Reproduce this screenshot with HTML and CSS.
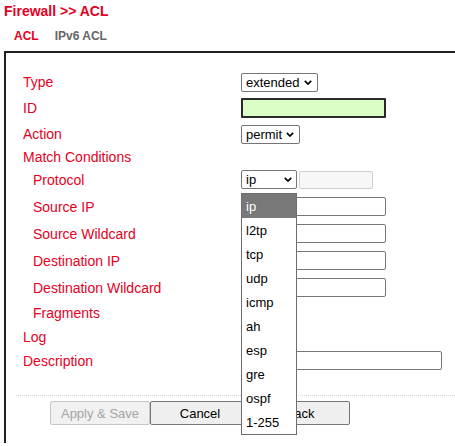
FILE: index.html
```html
<!DOCTYPE html>
<html>
<head>
<meta charset="utf-8">
<link rel="stylesheet" href="styles.css">
</head>
<body>
<div class="page">
  <div class="title">Firewall &gt;&gt; ACL</div>
  <div class="tabs"><span class="tab active">ACL</span><span class="tab">IPv6 ACL</span></div>
  <div class="panel">
    <div class="row h26">
      <div class="label">Type</div>
      <div class="select"><span class="sel-text">extended</span><svg class="chev" width="8" height="5" viewBox="0 0 8 5"><path d="M0.8 0.8 L4 4 L7.2 0.8" fill="none" stroke="#000" stroke-width="1.7"/></svg></div>
    </div>
    <div class="row h26">
      <div class="label">ID</div>
      <div class="input id-input"></div>
    </div>
    <div class="row h26">
      <div class="label">Action</div>
      <div class="select"><span class="sel-text">permit</span><svg class="chev" width="8" height="5" viewBox="0 0 8 5"><path d="M0.8 0.8 L4 4 L7.2 0.8" fill="none" stroke="#000" stroke-width="1.7"/></svg></div>
    </div>
    <div class="row h19">
      <div class="label">Match Conditions</div>
    </div>
    <div class="row h27">
      <div class="label sub">Protocol</div>
      <div class="ctrl-group">
        <div class="proto-wrap">
          <div class="select proto"><span class="sel-text">ip</span><svg class="chev" width="8" height="5" viewBox="0 0 8 5"><path d="M0.8 0.8 L4 4 L7.2 0.8" fill="none" stroke="#000" stroke-width="1.7"/></svg></div>
          <div class="popup">
            <div class="opt selected">ip</div>
            <div class="opt">l2tp</div>
            <div class="opt">tcp</div>
            <div class="opt">udp</div>
            <div class="opt">icmp</div>
            <div class="opt">ah</div>
            <div class="opt">esp</div>
            <div class="opt">gre</div>
            <div class="opt">ospf</div>
            <div class="opt">1-255</div>
          </div>
        </div>
        <div class="input disabled-input"></div>
      </div>
    </div>
    <div class="row h27">
      <div class="label sub">Source IP</div>
      <div class="input"></div>
    </div>
    <div class="row h27">
      <div class="label sub">Source Wildcard</div>
      <div class="input"></div>
    </div>
    <div class="row h27">
      <div class="label sub">Destination IP</div>
      <div class="input"></div>
    </div>
    <div class="row h27">
      <div class="label sub">Destination Wildcard</div>
      <div class="input"></div>
    </div>
    <div class="row h23">
      <div class="label sub">Fragments</div>
    </div>
    <div class="row h25">
      <div class="label">Log</div>
    </div>
    <div class="row h23">
      <div class="label">Description</div>
      <div class="input wide"></div>
    </div>
    <div class="sep"></div>
    <div class="buttons">
      <button class="btn" disabled>Apply &amp; Save</button>
      <button class="btn">Cancel</button>
      <button class="btn">Back</button>
    </div>
  </div>
</div>
</body>
</html>
```
FILE: styles.css
```css
html, body {
  margin: 0;
  padding: 0;
  overflow: hidden;
  background: #fff;
}
body {
  font-family: "Liberation Sans", Arial, sans-serif;
  color: #000;
}
.page {
  padding: 3px 0 0 4px;
}
.title {
  font-size: 14px;
  font-weight: bold;
  line-height: 16px;
  color: #e6001e;
}
.tabs {
  margin-top: 10px;
  padding-left: 10px;
  display: flex;
  gap: 16px;
  font-size: 12px;
  font-weight: bold;
  line-height: 14px;
}
.tab {
  color: #666;
}
.tab.active {
  color: #e6001e;
}
.panel {
  margin-top: 8px;
  border-top: 2px solid #222;
  border-left: 2px solid #222;
  padding-top: 16px;
  padding-bottom: 18px;
}
.row {
  display: flex;
  align-items: center;
  padding-left: 17px;
}
.h19 { height: 19px; }
.h23 { height: 23px; }
.h25 { height: 25px; }
.h26 { height: 26px; }
.h27 { height: 27px; }
.label {
  width: 218px;
  flex: none;
  font-size: 14px;
  line-height: 16px;
  color: #e6001e;
}
.label.sub {
  width: 208px;
  padding-left: 10px;
}
.select {
  box-sizing: border-box;
  height: 19px;
  display: inline-flex;
  align-items: center;
  border: 1px solid #767676;
  border-radius: 2px;
  background: #fff;
  padding: 0 5px 0 4px;
  font-size: 13px;
  line-height: 15px;
}
.sel-text {
  flex: 1;
  margin-right: 4px;
}
.chev {
  display: block;
  flex: none;
}
.select.proto {
  width: 56px;
  padding-right: 4px;
}
.ctrl-group {
  display: flex;
  gap: 2px;
  align-items: center;
}
.proto-wrap {
  position: relative;
}
.popup {
  position: absolute;
  left: 0;
  top: 23px;
  width: 56px;
  box-sizing: border-box;
  border: 1px solid #6e6e6e;
  background: #fff;
  z-index: 10;
}
.opt {
  height: 24px;
  line-height: 25px;
  font-size: 13px;
  padding-left: 4px;
  color: #000;
}
.opt.selected {
  background: #787878;
  color: #fff;
}
.input {
  box-sizing: border-box;
  width: 145px;
  height: 19px;
  border: 1px solid #767676;
  border-radius: 2px;
  background: #fff;
}
.input.id-input {
  border: 2px solid #2a2a2a;
  border-radius: 1px;
  background: #d9ffc6;
  height: 20px;
}
.input.disabled-input {
  width: 74px;
  height: 18px;
  border: 1px solid #d0d0d0;
  background: #f7f7f7;
}
.input.wide {
  width: 201px;
}
.sep {
  margin: 23px 0 0 10px;
  border-top: 1px dotted #d4d4d4;
}
.buttons {
  display: flex;
  padding-left: 44px;
  margin-top: 5px;
}
.btn {
  box-sizing: border-box;
  width: 100px;
  height: 24px;
  margin: 0;
  padding: 0;
  font-family: "Liberation Sans", Arial, sans-serif;
  font-size: 13px;
  color: #000;
  background: #efefef;
  border: 1px solid #767676;
  border-radius: 2px;
}
.btn:disabled {
  color: #a5a5a5;
  background: #f1f1f1;
  border-color: #c6c6c6;
}
```
